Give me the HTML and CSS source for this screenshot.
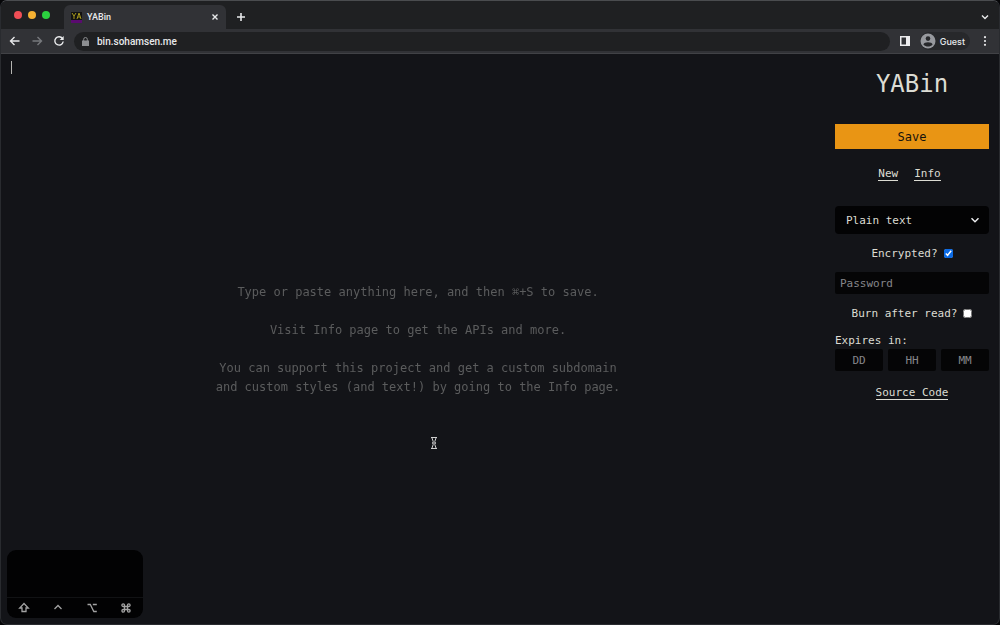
FILE: index.html
```html
<!DOCTYPE html>
<html lang="en">
<head>
<meta charset="utf-8">
<title>YABin</title>
<link rel="stylesheet" href="styles.css">
</head>
<body>
<div class="window">
  <header class="tabstrip">
    <div class="lights"><span class="light red"></span><span class="light yellow"></span><span class="light green"></span></div>
    <div class="tab">
      <svg class="favicon" viewBox="0 0 11 11"><path class="fav-bg" d="M0 0h11v11H0z"/><path class="fav-purple" d="M0 8h11v3H0z"/><path class="fav-mark" d="M1 1l2 3 2-3M3 4v3M6 7l2-6 2 6M7 5h2"/></svg>
      <span class="tab-title">YABin</span>
      <button class="icon-button" aria-label="Close tab"><svg class="icon small" viewBox="0 0 8 8"><path d="M1.500 1.500l5 5M6.500 1.500l-5 5"/></svg></button>
    </div>
    <button class="icon-button new-tab" aria-label="New tab"><svg class="icon plus" viewBox="0 0 8 8"><path d="M4 0v8M0 4h8"/></svg></button>
    <button class="icon-button tab-menu" aria-label="Search tabs"><svg class="icon small" viewBox="0 0 8 8"><path d="M1 2.500L4 5.500 7 2.500"/></svg></button>
  </header>
  <nav class="toolbar">
    <button class="icon-button" aria-label="Back"><svg class="icon" viewBox="0 0 12 12"><path d="M10.500 6h-9M5.500 2l-4 4 4 4"/></svg></button>
    <button class="icon-button dim" aria-label="Forward"><svg class="icon" viewBox="0 0 12 12"><path d="M1.500 6h9M6.500 2l4 4-4 4"/></svg></button>
    <button class="icon-button" aria-label="Reload"><svg class="icon" viewBox="0 0 12 12"><path d="M9.500 3.500A4.200 4.200 0 1 0 10.200 6.500"/><path class="solid" d="M10.700 1v4h-4z"/></svg></button>
    <div class="address">
      <svg class="lock" viewBox="0 0 7 9"><path d="M0 3.500h7V9H0z"/><path class="shackle" d="M1.700 4V2.300a1.800 1.800 0 0 1 3.600 0V4"/></svg>
      <input class="url" aria-label="Address" value="bin.sohamsen.me">
    </div>
    <button class="icon-button" aria-label="Side panel"><svg class="panel-icon" viewBox="0 0 10 10"><path d="M0 0h10v10H0zM1.500 1.500v7h4.500v-7z"/></svg></button>
    <button class="profile"><svg class="avatar" viewBox="0 0 16 16"><circle class="avatar-bg" cx="8" cy="8" r="7.500"/><circle class="avatar-fg" cx="8" cy="5.600" r="2.300"/><path class="avatar-fg" d="M3.400 11.500C4 8.500 12 8.500 12.600 11.500 10 14.300 6 14.300 3.400 11.500z"/></svg>Guest</button>
    <button class="icon-button menu" aria-label="Menu"><svg class="dots" viewBox="0 0 4 10"><circle cx="2" cy="1.200" r="1.100"/><circle cx="2" cy="5" r="1.100"/><circle cx="2" cy="8.800" r="1.100"/></svg></button>
  </nav>
  <main class="page">
    <section class="editor">
      <textarea class="paste" aria-label="Paste content" autofocus></textarea>
      <div class="hint">
        <p>Type or paste anything here, and then ⌘+S to save.</p>
        <p>Visit Info page to get the APIs and more.</p>
        <p>You can support this project and get a custom subdomain<br>and custom styles (and text!) by going to the Info page.</p>
      </div>
      <span class="caret"></span>
    </section>
    <aside class="sidebar">
      <h1 class="brand">YABin</h1>
      <button class="save">Save</button>
      <div class="links"><a href="#new">New</a><a href="#info">Info</a></div>
      <div class="language">
        <select class="language-select" aria-label="Language"><option>Plain text</option></select>
        <svg class="chevron" viewBox="0 0 10 10"><path d="M1.500 3.200L5 6.700 8.500 3.200"/></svg>
      </div>
      <label class="check">Encrypted?<input type="checkbox" checked></label>
      <input class="field password" type="password" placeholder="Password" aria-label="Password">
      <label class="check">Burn after read?<input type="checkbox"></label>
      <fieldset class="expiry">
        <legend>Expires in:</legend>
        <div class="expiry-row">
          <input class="field unit" placeholder="DD" aria-label="Days">
          <input class="field unit" placeholder="HH" aria-label="Hours">
          <input class="field unit" placeholder="MM" aria-label="Minutes">
        </div>
      </fieldset>
      <a class="source" href="#source">Source Code</a>
    </aside>
  </main>
  <div class="keys">
    <div class="modifiers">
      <svg class="key" viewBox="0 0 12 12"><path d="M6 1.500L1.700 6H4v3.500h4V6h2.300z"/></svg>
      <svg class="key" viewBox="0 0 12 12"><path d="M2.500 7L6 3.500 9.500 7"/></svg>
      <svg class="key" viewBox="0 0 12 12"><path d="M1.500 2.500h2.800l3.500 7h3M6.800 2.500h4"/></svg>
      <svg class="key" viewBox="0 0 12 12"><path d="M4.500 4.500h3v3h-3zM4.500 4.500H3.200a1.300 1.300 0 1 1 1.300-1.300zM7.500 4.500V3.200a1.300 1.300 0 1 1 1.300 1.300zM7.500 7.500h1.300a1.300 1.300 0 1 1-1.300 1.300zM4.500 7.500v1.300a1.300 1.300 0 1 1-1.300-1.300z"/></svg>
    </div>
  </div>
  <svg class="pointer" viewBox="0 0 8 14"><path class="pointer-edge" d="M1 1.500h6M1 12.500h6M2 2l1.200 3.500L2.500 7l.7 1.500L2 12M6 2L4.800 5.500 5.500 7l-.7 1.500L6 12M3 7h2"/></svg>
</div>
</body>
</html>
```
FILE: styles.css
```css
* { box-sizing: border-box; }
body { margin: 0; background: #050507; }
button, input, select, textarea { font: inherit; color: inherit; border: 0; margin: 0; }
button { cursor: pointer; }

.window {
  position: relative;
  display: flex;
  flex-direction: column;
  min-height: 100vh;
  background: #131418;
  border: 1px solid #292b2f;
  border-top-color: #4a4c4f;
  border-radius: 7px;
  overflow: hidden;
  font-family: Inter, Roboto, sans-serif;
}

.tabstrip { display: flex; align-items: center; height: 28px; background: #1f2022; padding-right: 7px; }
.lights { display: flex; gap: 6px; padding: 0 14px 0 13px; }
.light { width: 8px; height: 8px; border-radius: 50%; }
.red { background: #f04e56; }
.yellow { background: #f5b132; }
.green { background: #2bd03f; }
.tab {
  display: flex;
  align-items: center;
  gap: 5px;
  align-self: flex-end;
  width: 162px;
  height: 24px;
  padding: 0 4px 0 7px;
  border-radius: 6px 6px 0 0;
  background: #313236;
  color: #e8e9eb;
  font-size: 9px;
}
.tab-title { flex: 1; font-family: Roboto, sans-serif; font-weight: 500; }
.favicon { width: 11px; height: 11px; }
.fav-bg { fill: #111; }
.fav-purple { fill: #5a0b70; }
.fav-mark { fill: none; stroke: #a89a1c; }
.icon-button { display: flex; align-items: center; justify-content: center; padding: 0; width: 14px; height: 14px; background: none; color: #e8e9eb; }
.icon { width: 12px; height: 12px; fill: none; stroke: currentColor; stroke-width: 1.4; }
.small { width: 8px; height: 8px; }
.plus { width: 8px; height: 8px; stroke-width: 1.6; }
.solid { fill: currentColor; stroke: none; }
.dim { color: #77797d; }
.new-tab { margin: 3px 0 0 8px; }
.tab-menu { margin: 3px 0 0 auto; }

.toolbar { display: flex; align-items: center; gap: 8px; height: 25px; padding: 0 7px; background: #313236; border-bottom: 1px solid #414246; }
.address { display: flex; flex: 1; align-items: center; gap: 8px; height: 19px; padding: 0 8px; border-radius: 10px; background: #1f2022; }
.lock { width: 7px; height: 9px; fill: #8c8e91; }
.shackle { fill: none; stroke: #8c8e91; }
.url { flex: 1; min-width: 0; padding: 0; background: none; color: #e8e9eb; font-family: Roboto, sans-serif; font-size: 10px; font-weight: 500; outline: 0; }
.panel-icon { width: 10px; height: 10px; fill: #ececee; fill-rule: evenodd; }
.profile { display: flex; align-items: center; gap: 4px; height: 18px; padding: 0 5px 0 0; border-radius: 9px; background: #27282b; color: #e8e9eb; font-size: 9px; font-weight: 500; }
.avatar { width: 16px; height: 16px; }
.avatar-bg { fill: #97999e; }
.avatar-fg { fill: #27282b; }
.dots { width: 4px; height: 10px; fill: #e8e9eb; }

.page { display: flex; flex: 1; color: #dcdcd3; font-family: "DejaVu Sans Mono", monospace; font-size: 11px; }
.editor { position: relative; display: flex; flex: 1; }
.paste { flex: 1; padding: 6px 10px; resize: none; outline: 0; background: transparent; font-size: 12px; line-height: 19px; caret-color: transparent; }
.hint {
  position: absolute;
  inset: 0;
  display: flex;
  flex-direction: column;
  justify-content: center;
  gap: 19px;
  padding-top: 2px;
  color: #5b5c5d;
  font-size: 12px;
  line-height: 19px;
  text-align: center;
  pointer-events: none;
}
.hint p { margin: 0; }
.caret { position: absolute; top: 7px; left: 10px; width: 1px; height: 13px; background: #b5b5b2; }

.sidebar { display: flex; flex-direction: column; width: 164px; padding: 14px 10px 14px 0; }
.brand { margin: 0 0 24px; font-size: 24px; font-weight: 400; line-height: 32px; text-align: center; }
.save { height: 25px; padding: 0; background: #e99514; color: #16130d; font-size: 12px; }
.links { display: flex; justify-content: center; gap: 16px; margin: 18px 5px 25px 0; }
.sidebar a { color: inherit; line-height: 13px; text-decoration: none; border-bottom: 1px solid currentColor; }
.language { position: relative; display: flex; }
.language-select { flex: 1; height: 28px; padding: 0 11px; appearance: none; border-radius: 4px; background: #030304; }
.chevron { position: absolute; top: 9px; right: 9px; width: 10px; height: 10px; fill: none; stroke: #e8e9eb; stroke-width: 1.5; pointer-events: none; }
.check { display: flex; align-items: center; justify-content: center; gap: 6px; height: 38px; }
.check input { width: 9px; height: 9px; accent-color: #0b6be6; }
.field { height: 22px; min-width: 0; padding: 0 5px; border-radius: 2px; background: #050506; outline: 0; }
.field::placeholder { color: #85868a; opacity: 1; }
.expiry { margin: 0; padding: 0; border: 0; min-width: 0; }
.expiry legend { padding: 0; line-height: 17px; }
.expiry-row { display: grid; grid-template-columns: repeat(3, 1fr); gap: 5px; }
.unit { text-align: center; }
.source { align-self: center; margin-top: 15px; }

.keys { position: absolute; left: 6px; bottom: 6px; display: flex; align-items: flex-end; width: 136px; height: 68px; border-radius: 9px; background: #020203; }
.modifiers { display: grid; grid-template-columns: repeat(4, 1fr); flex: 1; justify-items: center; align-items: center; height: 21px; border-top: 1px solid #111214; }
.key { width: 12px; height: 12px; fill: none; stroke: #a2a2a2; stroke-width: 1.3; }
.pointer { position: absolute; left: 429px; top: 435px; width: 8px; height: 14px; fill: none; }
.pointer-edge { stroke: #d0d0d0; stroke-width: 1; }
```
